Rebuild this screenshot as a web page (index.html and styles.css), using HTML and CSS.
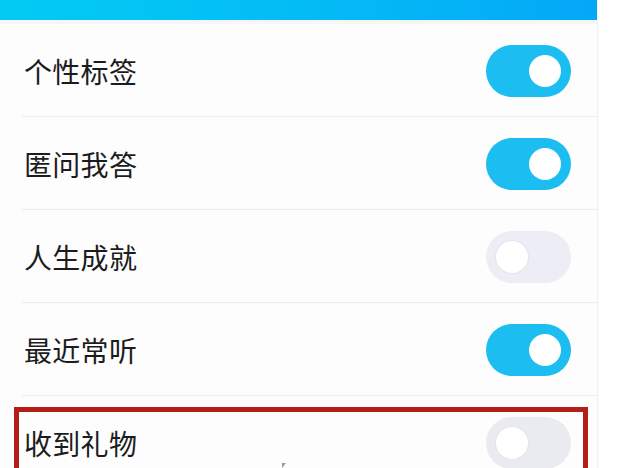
FILE: index.html
```html
<!DOCTYPE html>
<html lang="zh">
<head>
<meta charset="utf-8">
<title>设置</title>
<link rel="stylesheet" href="styles.css">
</head>
<body>
<div class="screen">
  <div class="topbar"></div>
  <ul class="list">
    <li class="row"><span class="label">个性标签</span><span class="switch on"><span class="knob"></span></span></li>
    <li class="row"><span class="label">匿问我答</span><span class="switch on"><span class="knob"></span></span></li>
    <li class="row"><span class="label">人生成就</span><span class="switch off"><span class="knob"></span></span></li>
    <li class="row"><span class="label">最近常听</span><span class="switch on"><span class="knob"></span></span></li>
    <li class="row last"><span class="label">收到礼物</span><span class="switch off dim"><span class="knob"></span></span></li>
  </ul>
  <div class="highlight"></div>
  <div class="cursor"></div>
</div>
</body>
</html>
```
FILE: styles.css
```css
html, body {
  margin: 0;
  padding: 0;
  background: #ffffff;
  overflow: hidden;
}
body {
  width: 621px;
  height: 468px;
  font-family: "Noto Sans CJK SC", "Noto Sans", sans-serif;
}
.screen {
  position: relative;
  width: 597px;
  height: 468px;
  background: #fdfdfd;
  border-right: 1px solid #f1f1f3;
}
.topbar {
  height: 20px;
  background: linear-gradient(90deg, #02cbf3 0%, #04bcf5 50%, #04a8f7 100%);
  border-bottom: 4px solid #f4f6f8;
}
.list {
  list-style: none;
  margin: 0;
  padding: 0;
}
.row {
  box-sizing: border-box;
  height: 93px;
  margin-left: 22px;
  padding: 1px 26px 0 2px;
  border-bottom: 1px solid #ececee;
  display: flex;
  align-items: center;
  justify-content: space-between;
}
.row.last {
  border-bottom: none;
  padding-top: 1px;
}
.label {
  font-size: 28px;
  color: #1c1c1c;
  letter-spacing: 0.3px;
}
.switch {
  box-sizing: border-box;
  width: 85px;
  height: 52px;
  border-radius: 26px;
  padding: 10px;
  display: flex;
  align-items: center;
}
.switch.on {
  background: #1cbdf1;
  justify-content: flex-end;
}
.switch.off {
  background: #ededf5;
  justify-content: flex-start;
}
.switch.dim {
  background: #eaeaf1;
}
.knob {
  width: 32px;
  height: 32px;
  border-radius: 50%;
  background: #ffffff;
}
.switch.off .knob {
  box-shadow: 0 0 0 1px #e4e4ec;
}
.highlight {
  position: absolute;
  left: 14px;
  top: 407px;
  width: 574px;
  height: 80px;
  box-sizing: border-box;
  border: 5px solid #b31e16;
}
.cursor {
  position: absolute;
  left: 282px;
  top: 463px;
  width: 0;
  height: 0;
  border-left: 4px solid #9a9a9a;
  border-bottom: 5px solid transparent;
}
```
